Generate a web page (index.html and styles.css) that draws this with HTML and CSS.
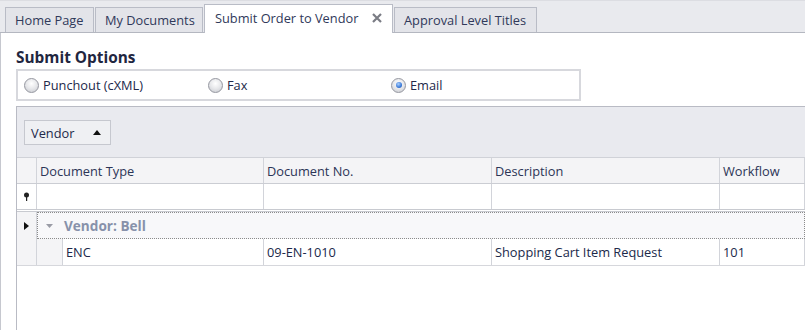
FILE: index.html
```html
<!DOCTYPE html>
<html lang="en">
<head>
    <meta charset="UTF-8">
    <title>Submit Order to Vendor</title>
    <link rel="stylesheet" href="styles.css">
</head>
<body>

<div class="tabstrip">
    <div class="tab tab-home">Home Page</div>
    <div class="tab tab-docs">My Documents</div>
    <div class="tab active">
        Submit Order to Vendor
        <svg class="close" width="10" height="10" viewBox="0 0 10 10"><path d="M1 1 L9 9 M9 1 L1 9" stroke="#7a7c84" stroke-width="2.2"/></svg>
    </div>
    <div class="tab tab-approval">Approval Level Titles</div>
</div>

<div class="page">
    <h2 class="title">Submit Options</h2>

    <div class="options">
        <label class="radio"><span class="dot"></span>Punchout (cXML)</label>
        <label class="radio"><span class="dot"></span>Fax</label>
        <label class="radio"><span class="dot checked"></span>Email</label>
    </div>

    <div class="grid">
        <div class="group-panel">
            <div class="group-btn">Vendor <svg width="8" height="5" viewBox="0 0 8 5"><path d="M0 5 L4 0 L8 5 Z" fill="#111"/></svg></div>
        </div>

        <div class="row header">
            <div class="cell ind"></div>
            <div class="cell">Document Type</div>
            <div class="cell">Document No.</div>
            <div class="cell">Description</div>
            <div class="cell">Workflow</div>
        </div>

        <div class="row filter">
            <div class="cell ind">
                <svg width="7" height="10" viewBox="0 0 7 10"><circle cx="3.5" cy="3" r="2.5" fill="#222"/><rect x="3" y="4" width="1.2" height="5" fill="#222"/></svg>
            </div>
            <div class="cell"></div>
            <div class="cell"></div>
            <div class="cell"></div>
            <div class="cell"></div>
        </div>

        <div class="row grouprow">
            <div class="cell ind">
                <svg width="5" height="8" viewBox="0 0 5 8"><path d="M0 0 L5 4 L0 8 Z" fill="#111"/></svg>
            </div>
            <div class="group-cell">
                <svg class="expand" width="7" height="4" viewBox="0 0 7 4"><path d="M0 0 L7 0 L3.5 4 Z" fill="#9a9ca6"/></svg>
                Vendor: Bell
            </div>
        </div>

        <div class="row data">
            <div class="cell ind"></div>
            <div class="cell indent"></div>
            <div class="cell">ENC</div>
            <div class="cell">09-EN-1010</div>
            <div class="cell">Shopping Cart Item Request</div>
            <div class="cell">101</div>
        </div>
    </div>
</div>

</body>
</html>
```

FILE: styles.css
```css
body {
    margin: 0;
    padding: 0;
    background-color: white;
    font-family: 'Open Sans', 'Noto Sans', sans-serif;
    font-size: 12.8px;
    color: #20294a;
    overflow: hidden;
    height: 330px;
}
.tabstrip {
    display: flex;
    align-items: flex-end;
    padding-left: 5px;
    background-color: #e9eaee;
    border-top: 1px solid #dcdde2;
    border-bottom: 1px solid #b4b7c0;
    box-sizing: border-box;
    height: 33px;
}
.tab {
    height: 25px;
    box-sizing: border-box;
    display: flex;
    align-items: center;
    padding: 0 0 1px 9px;
    background-color: #e3e4e9;
    border: 1px solid #b9bcc6;
    border-bottom: none;
    margin-right: 1px;
    color: #30395a;
}
.tab-home {
    width: 89px;
}
.tab-docs {
    width: 108px;
}
.tab-approval {
    width: 143px;
}
.tab.active {
    height: 29px;
    margin-bottom: -1px;
    background-color: white;
    padding: 0 10px 2px 10px;
    width: 189px;
    justify-content: space-between;
}
.page {
    border-left: 1px solid #c6c8cf;
    padding: 15px 0 0 15px;
    height: 297px;
    box-sizing: border-box;
}
.title {
    margin: 0;
    font-size: 15.4px;
    font-weight: bold;
    line-height: 20px;
    color: #1f2640;
}
.options {
    display: grid;
    grid-template-columns: 184px 183px 1fr;
    align-items: center;
    width: 565px;
    height: 32px;
    margin-top: 1px;
    padding-left: 6px;
    box-sizing: border-box;
    border: 2px solid #d7d8dd;
}
.radio {
    display: flex;
    align-items: center;
    gap: 4px;
    color: #22294a;
}
.dot {
    width: 13px;
    height: 13px;
    border-radius: 50%;
    border: 1px solid #9597a0;
    background: radial-gradient(circle at 50% 35%, #ffffff 0%, #e6e7ea 50%, #c4c6cc 100%);
    display: flex;
    align-items: center;
    justify-content: center;
}
.dot.checked::after {
    content: '';
    width: 6px;
    height: 6px;
    border-radius: 50%;
    background: radial-gradient(circle at 40% 35%, #a9d0ff 0%, #3b7ad8 60%, #1f4fa6 100%);
}
.grid {
    margin-top: 5px;
    border-top: 1px solid #b9bbc4;
    border-left: 1px solid #b9bbc4;
    height: 224px;
    box-sizing: border-box;
}
.group-panel {
    height: 50px;
    background-color: #e9eaef;
    padding: 13px 0 0 7px;
    box-sizing: border-box;
}
.group-btn {
    display: flex;
    align-items: center;
    justify-content: space-between;
    width: 87px;
    height: 25px;
    box-sizing: border-box;
    padding: 0 9px 0 6px;
    background-color: #eff0f3;
    border: 1px solid #c6c8cf;
    color: #22294a;
}
.row {
    display: grid;
    grid-template-columns: 20px 227px 228px 228px 1fr;
}
.cell {
    display: flex;
    align-items: center;
    padding-left: 3px;
    border-right: 1px solid #d2d4da;
    overflow: hidden;
    white-space: nowrap;
}
.cell.ind {
    justify-content: center;
    padding-left: 0;
    background-color: #f4f4f6;
}
.header {
    height: 27px;
    background-color: #f4f4f6;
    border-top: 1px solid #d0d2d8;
    border-bottom: 1px solid #cbcdd3;
    box-sizing: border-box;
    color: #2c3556;
}
.filter {
    height: 28px;
    box-sizing: border-box;
    border-bottom: 3px double #c8cad0;
}
.filter .cell.ind {
    background-color: white;
}
.grouprow {
    height: 27px;
    grid-template-columns: 20px 1fr;
    background-color: #f8f8fa;
    box-sizing: border-box;
}
.group-cell {
    display: flex;
    align-items: center;
    gap: 11px;
    padding-left: 8px;
    border: 1px dotted #8b8b8b;
    font-size: 13.6px;
    font-weight: bold;
    color: #8791aa;
}
.data {
    height: 27px;
    grid-template-columns: 20px 26px 201px 228px 228px 1fr;
    border-bottom: 1px solid #d6d7dc;
    box-sizing: border-box;
}
.cell.indent {
    background-color: #f4f4f6;
    padding-left: 0;
}
```
